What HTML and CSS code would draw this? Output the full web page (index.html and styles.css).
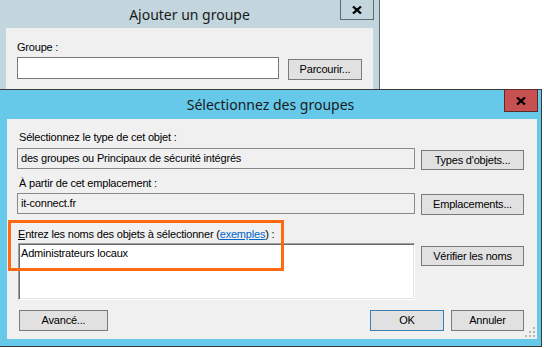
FILE: index.html
```html
<!DOCTYPE html>
<html lang="fr">
<head>
<meta charset="utf-8">
<title>Sélectionnez des groupes</title>
<link rel="stylesheet" href="styles.css">
</head>
<body>
<div class="desk">
  <div class="win win-back">
    <div class="titlebar back-title">
      <span class="title">Ajouter un groupe</span>
      <span class="close close-back"><svg width="10" height="8" viewBox="0 0 10 8"><path d="M1 0.5 L9 7.5 M9 0.5 L1 7.5" stroke="#000" stroke-width="2.3" fill="none"/></svg></span>
    </div>
    <div class="panel back-panel">
      <div class="lbl back-lbl">Groupe :</div>
      <div class="row">
        <div class="input"></div>
        <div class="btn btn-parcourir">Parcourir...</div>
      </div>
    </div>
  </div>

  <div class="win win-front">
    <div class="titlebar front-title">
      <span class="title">Sélectionnez des groupes</span>
      <span class="close close-front"><svg width="10" height="8" viewBox="0 0 10 8"><path d="M1 0.5 L9 7.5 M9 0.5 L1 7.5" stroke="#000" stroke-width="2.3" fill="none"/></svg></span>
    </div>
    <div class="panel front-panel">
      <div class="lbl l1">Sélectionnez le type de cet objet :</div>
      <div class="row r1">
        <div class="field">des groupes ou Principaux de sécurité intégrés</div>
        <div class="btn side b1">Types d'objets...</div>
      </div>
      <div class="lbl l2">À partir de cet emplacement :</div>
      <div class="row r2">
        <div class="field">it-connect.fr</div>
        <div class="btn side b2">Emplacements...</div>
      </div>
      <div class="lbl l3"><span class="u">E</span>ntrez les noms des objets à sélectionner (<span class="link">exemples</span>) :</div>
      <div class="row r3">
        <div class="names">Administrateurs locaux</div>
        <div class="btn side b3">Vérifier les noms</div>
      </div>
      <div class="row actions">
        <div class="btn b-adv">Avancé...</div>
        <div class="spacer"></div>
        <div class="btn b-ok">OK</div>
        <div class="btn b-cancel">Annuler</div>
      </div>
      <div class="highlight"></div>
      <svg class="grip" width="10" height="10" viewBox="0 0 10 10">
        <rect x="8" y="0" width="2" height="2" fill="#b8b8b8"/>
        <rect x="4" y="4" width="2" height="2" fill="#b8b8b8"/>
        <rect x="8" y="4" width="2" height="2" fill="#b8b8b8"/>
        <rect x="0" y="8" width="2" height="2" fill="#b8b8b8"/>
        <rect x="4" y="8" width="2" height="2" fill="#b8b8b8"/>
        <rect x="8" y="8" width="2" height="2" fill="#b8b8b8"/>
      </svg>
    </div>
  </div>
</div>
</body>
</html>
```
FILE: styles.css
```css
* { box-sizing: border-box; }
html, body { margin: 0; padding: 0; }
body {
  width: 544px;
  height: 348px;
  overflow: hidden;
  background: #ffffff;
  font-family: "Liberation Sans", Arial, sans-serif;
  font-size: 11px;
  line-height: 13px;
  letter-spacing: -0.2px;
  color: #000;
}
.desk { position: relative; width: 544px; height: 348px; overflow: hidden; }

.win { position: absolute; display: flex; flex-direction: column; }
.win-back {
  left: -1px; top: -1px;
  width: 381px; height: 120px;
  background: #c3d5dd;
  border: 1px solid #5f6a70;
}
.win-front {
  left: -1px; top: 89px;
  width: 543px; height: 258px;
  background: #66c9ea;
  border: 1px solid #3a3a3a;
}

.titlebar {
  position: relative;
  flex: none;
  display: flex;
  align-items: center;
  justify-content: center;
  font-family: "Noto Sans", sans-serif;
  font-size: 14px;
  line-height: 19px;
  letter-spacing: 0;
  color: #1a1a1a;
}
.back-title { height: 28px; }
.front-title { height: 29px; }

.close {
  position: absolute;
  top: -1px;
  width: 34px;
  display: flex;
  align-items: center;
  justify-content: center;
  border: 1px solid;
}
.close-back { right: 5px; height: 21px; border-color: #5f6a70; }
.close-front { right: 3px; height: 23px; border-color: #5a2a2a; background: #c75050; }

.panel { background: #f0f0f0; }
.back-panel { flex: 1; margin: 0 6px; padding: 13px 0 0 11px; }
.front-panel {
  position: relative;
  flex: none;
  height: 220px;
  margin: 0 4px 7px 7px;
  padding: 12px 13px 0 10px;
  display: flex;
  flex-direction: column;
}

.row { display: flex; align-items: flex-start; }
.lbl { white-space: nowrap; }
.back-lbl { margin-bottom: 3px; }
.input {
  width: 262px; height: 22px;
  background: #fff;
  border: 1px solid #7a7a7a;
}

.btn {
  display: flex;
  align-items: center;
  justify-content: center;
  background: #e1e1e1;
  border: 1px solid #7a7a7a;
  white-space: nowrap;
}
.btn-parcourir { width: 74px; height: 21px; margin: 2px 0 0 9px; }

.l1 { margin: 0 0 4px 2px; }
.l2 { margin: 7px 0 3px 2px; }
.l3 { margin: 13px 0 2px 1px; }

.r1, .r2, .r3 { gap: 6px; }
.field {
  width: 398px; height: 21px;
  border: 1px solid #8a8a8a;
  background: #f0f0f0;
  padding-left: 3px;
  line-height: 19px;
  white-space: nowrap;
}
.side { width: 103px; height: 20px; }
.b1 { margin-top: 2px; }
.b2 { margin-top: 1px; height: 21px; }
.b3 { margin-top: 3px; }

.names {
  width: 397px; height: 57px;
  margin-left: 1px;
  background: #fff;
  border-style: solid;
  border-width: 1px;
  border-color: #a0a0a0 #ffffff #ffffff #a0a0a0;
  box-shadow: inset 1px 1px 0 #696969, inset -1px -1px 0 #e3e3e3;
  padding: 3px 2px;
}

.u { text-decoration: underline; }
.link { color: #0066cc; text-decoration: underline; }

.actions { margin-top: 10px; gap: 7px; }
.actions .btn { height: 21px; }
.b-adv { width: 89px; margin-left: 2px; }
.spacer { flex: 1; }
.b-ok { width: 74px; border-color: #3c7fb1; }
.b-cancel { width: 73px; }

.highlight {
  position: absolute;
  left: 1px; top: 101px;
  width: 276px; height: 51px;
  border: 3px solid #ff6a10;
  pointer-events: none;
}
.grip { position: absolute; right: 2px; bottom: 2px; }
```
